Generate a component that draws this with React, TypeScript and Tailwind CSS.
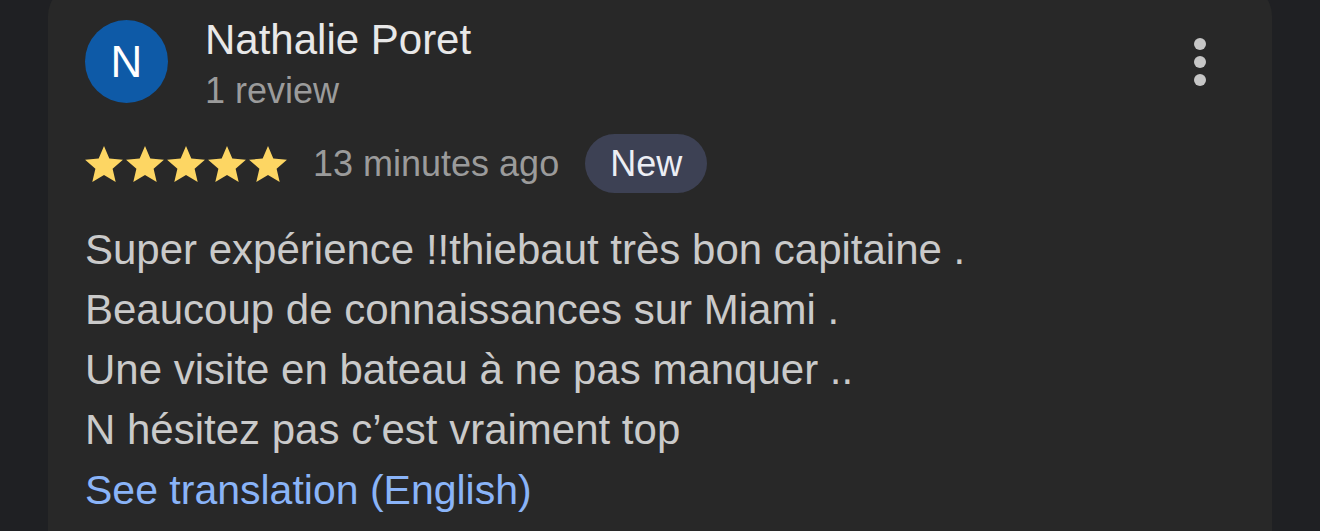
const lines = [
  'Super expérience !!thiebaut très bon capitaine .',
  'Beaucoup de connaissances sur Miami .',
  'Une visite en bateau à ne pas manquer ..',
  'N hésitez pas c’est vraiment top',
]

function Star() {
  return (
    <svg viewBox="2 2 20 19" className="w-[38px] h-[36px]" fill="#fdd663">
      <path d="M12 17.27L18.18 21l-1.64-7.03L22 9.24l-7.19-.61L12 2 9.19 8.63 2 9.24l5.46 4.73L5.82 21z" />
    </svg>
  )
}

export default function App() {
  return (
    <div className="w-[1320px] h-[531px] overflow-hidden bg-[#1f2023] px-[48px] font-['Liberation_Sans',Arial,sans-serif]">
      <div className="-mt-[16px] h-[600px] rounded-[32px] bg-[#282828] pl-[37px] pr-[66px] pt-[36px]">
        {/* Header */}
        <div className="flex items-start">
          <div className="w-[83px] h-[83px] rounded-full bg-[#0e5aa7] flex items-center justify-center text-white text-[44px] leading-none">
            N
          </div>
          <div className="ml-[37px] -mt-[4px] flex flex-col">
            <span className="text-[42px] leading-[48px] text-[#e8e8e8]">Nathalie Poret</span>
            <span className="mt-[6px] text-[36px] leading-[42px] text-[#9b9b9b]">1 review</span>
          </div>
          <div className="ml-auto mt-[18px] flex flex-col items-center gap-[6px]">
            <span className="w-[12px] h-[12px] rounded-full bg-[#c6c6c6]" />
            <span className="w-[12px] h-[12px] rounded-full bg-[#c6c6c6]" />
            <span className="w-[12px] h-[12px] rounded-full bg-[#c6c6c6]" />
          </div>
        </div>

        {/* Rating row */}
        <div className="mt-[22px] flex items-center h-[59px]">
          <div className="flex items-center gap-[3px]">
            <Star />
            <Star />
            <Star />
            <Star />
            <Star />
          </div>
          <span className="ml-[26px] text-[36px] text-[#9b9b9b]">13 minutes ago</span>
          <span className="ml-[26px] h-[59px] px-[25px] rounded-full bg-[#3d4154] flex items-center text-[36px] font-medium text-[#eceef4]">
            New
          </span>
        </div>

        {/* Review text */}
        <div className="mt-[27px] text-[42px] leading-[60px] text-[#cacaca]">
          {lines.map((l) => (
            <div key={l}>{l}</div>
          ))}
          <div className="text-[41px] text-[#8ab4f8]">See translation (English)</div>
        </div>
      </div>
    </div>
  )
}
